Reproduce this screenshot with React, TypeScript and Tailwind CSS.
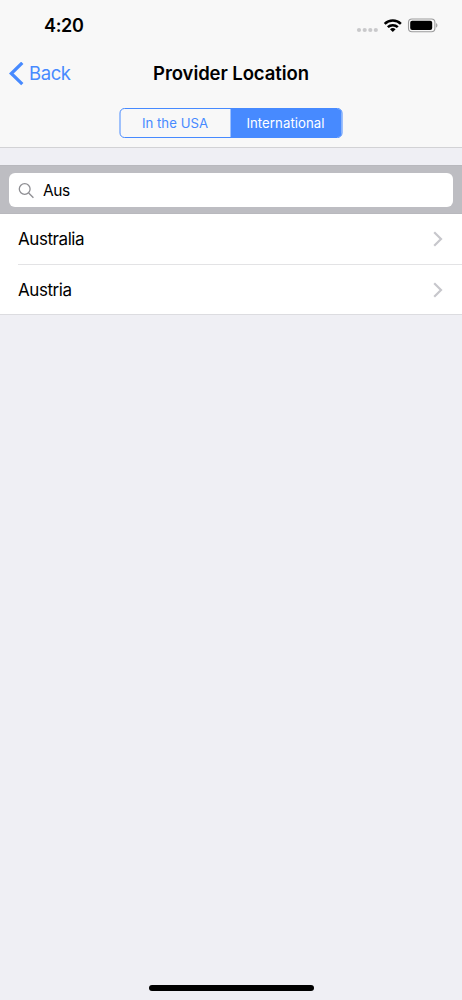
const countries = ['Australia', 'Austria'];

function StatusBar() {
  return (
    <div className="flex h-[50px] items-center justify-between pl-[44px] pr-[24px]">
      <span className="pt-[2px] text-[18px] leading-[50px] font-semibold tracking-[-0.35px] text-black">4:20</span>
      <svg width="82" height="20" viewBox="356 15 82 20" fill="none">
        <g fill="#c9c9cb">
          <circle cx="359" cy="30" r="2.1" />
          <circle cx="364.7" cy="30" r="2.1" />
          <circle cx="370.3" cy="30" r="2.1" />
          <circle cx="375.8" cy="30" r="2.1" />
        </g>
        <g stroke="#000" strokeWidth="2.5">
          <path d="M384.7 23.9a11.5 11.5 0 0 1 16.2 0" />
          <path d="M387.8 27.2a7.1 7.1 0 0 1 10 0" />
        </g>
        <path d="M390 29.3a4.1 4.1 0 0 1 5.6 0l-2.8 2.8z" fill="#000" />
        <rect x="408.5" y="19" width="26.4" height="12.8" rx="3.5" stroke="#9b9b9c" strokeWidth="1.1" />
        <rect x="410.2" y="20.7" width="22" height="9.4" rx="2" fill="#000" />
        <path d="M436.1 23.1c1.8.9 1.8 3.7 0 4.6z" fill="#9b9b9c" />
      </svg>
    </div>
  );
}

function Chevron() {
  return (
    <svg width="10" height="16" viewBox="0 0 10 16" fill="none">
      <path d="M1.2 1.2 8 8l-6.8 6.8" stroke="#c7c7cc" strokeWidth="2.2" />
    </svg>
  );
}

export default function App() {
  return (
    <div className="flex h-[1000px] w-[462px] flex-col overflow-hidden bg-[#efeff4] font-['Inter','Liberation_Sans',sans-serif] text-black">
      <header className="h-[148px] shrink-0 border-b border-[#d2d2d5] bg-[#f8f8f8]">
        <StatusBar />
        <nav className="grid h-[47px] grid-cols-[1fr_auto_1fr] items-center pl-[9px]">
          <button className="flex items-center gap-[5px] text-[18.5px] tracking-[-0.4px] text-[#478aff]">
            <svg width="15" height="24" viewBox="0 0 15 24" fill="none">
              <path d="M13.3 .8 2.3 11.5l11 10.7" stroke="#478aff" strokeWidth="3.2" />
            </svg>
            Back
          </button>
          <h1 className="-ml-[9px] text-[18.5px] font-semibold tracking-[-0.08px]">Provider Location</h1>
        </nav>
        <div className="mx-auto mt-[11px] flex h-[30px] w-[223px] -translate-x-[0.5px] overflow-hidden rounded-[5px] border border-[#478aff] text-[13.2px]">
          <button className="w-[110px] pt-px tracking-[0.02px] text-[#478aff]">In the USA</button>
          <button className="flex-1 bg-[#478aff] pt-px tracking-[0.06px] text-white">International</button>
        </div>
      </header>

      <main className="pt-[17px]">
        <div className="h-[49px] border-y border-[#b8b8bd] bg-[#bdbdc2] px-[9px] pt-[7px]">
          <label className="flex h-[34px] items-center gap-[8px] rounded-[6px] bg-white pl-[9px]">
            <svg width="17" height="17" viewBox="0 0 17 17" fill="none" stroke="#8e8e93" strokeWidth="1.3">
              <circle cx="6.7" cy="7" r="5.4" />
              <path d="m10.7 11 4.7 4.7" />
            </svg>
            <input
              className="w-[380px] bg-transparent pt-[2px] text-[15.5px] tracking-[-0.4px] outline-none"
              defaultValue="Aus"
            />
          </label>
        </div>
        <ul className="border-b border-[#dcdce0] bg-white pl-[18px]">
          {countries.map((country) => (
            <li
              key={country}
              className="flex h-[51px] items-center justify-between border-b border-[#e3e3e5] pr-[19px] text-[17px] tracking-[-0.43px] last:h-[49px] last:border-b-0"
            >
              <span className="pt-[2px]">{country}</span>
              <Chevron />
            </li>
          ))}
        </ul>
      </main>

      <div className="mx-auto mt-auto mb-[9px] h-[6px] w-[165px] shrink-0 rounded-full bg-black" />
    </div>
  );
}
